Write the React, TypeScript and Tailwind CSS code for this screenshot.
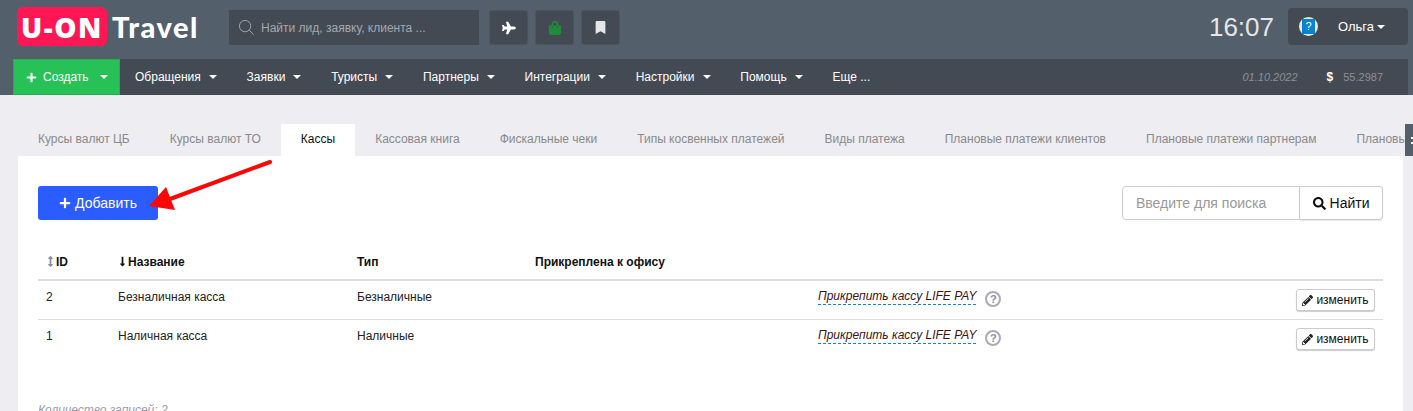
import { FaPlane, FaShoppingBag, FaBookmark, FaSearch, FaPlus, FaPencilAlt, FaLongArrowAltDown, FaArrowsAltV } from "react-icons/fa";

const F = "font-['Liberation_Sans',Arial,sans-serif]";

function Caret({ className = "" }: { className?: string }) {
  return <span className={`inline-block w-0 h-0 border-x-[4px] border-x-transparent border-t-[4px] border-t-white ${className}`} />;
}

const menu = ["Обращения", "Заявки", "Туристы", "Партнеры", "Интеграции", "Настройки", "Помощь"];

const tabs = [
  "Курсы валют ЦБ",
  "Курсы валют ТО",
  "Кассы",
  "Кассовая книга",
  "Фискальные чеки",
  "Типы косвенных платежей",
  "Виды платежа",
  "Плановые платежи клиентов",
  "Плановые платежи партнерам",
  "Плановые платежи",
];

function Row({ id, name, type, border }: { id: string; name: string; type: string; border: string }) {
  return (
    <div className={`flex text-[12px] text-[#222] whitespace-nowrap ${border}`}>
      <div className="w-[80px] pl-[8px] pt-[7px]">{id}</div>
      <div className="w-[239px] pt-[7px]">{name}</div>
      <div className="w-[461px] pt-[7px]">{type}</div>
      <div className="w-[190px] pt-[8px] flex items-start">
        <span className="italic text-[#3d1212] border-b border-dashed border-[#0b84d8] leading-[15px] h-[16px]">Прикрепить кассу LIFE PAY</span>
        <span className="ml-[9px] mt-[2px] w-[16px] h-[16px] rounded-full border-2 border-[#a9a9b8] text-[#8d8d9e] text-[11px] font-bold leading-[12px] text-center">?</span>
      </div>
      <div className="flex-1 flex justify-end pr-[8px] pt-[8px]">
        <span className="h-[22px] w-[79px] border border-[#ccc] rounded-[3px] shadow-[0_1px_1px_rgba(0,0,0,0.2)] flex items-center justify-center gap-[3px] text-[12px] text-[#111] bg-white">
          <FaPencilAlt size={11} className="text-[#222]" />изменить
        </span>
      </div>
    </div>
  );
}

export default function App() {
  return (
    <div className={`${F} relative w-[1413px] h-[411px] overflow-hidden bg-[#ededf2]`}>
      <div className="h-[95px] bg-[#535f6b]">
        {/* top header */}
        <div className="h-[59px] flex items-start pl-[17px]">
          <div className="mt-[7px] w-[90px] h-[39px] bg-[#ff1654] rounded-[6px] flex items-center justify-center text-white text-[28px] font-extrabold font-['Open_Sans',sans-serif] tracking-[1.5px]">U-ON</div>
          <div className="ml-[5px] mt-[8px] h-[38px] leading-[38px] text-white text-[29px] font-black font-['Lato',sans-serif] tracking-[1.5px] w-[117px]">Travel</div>
          <div className="mt-[10px] w-[250px] h-[35px] bg-[#434a54] flex items-center pl-[9px] text-[#a3a9af] text-[12px] gap-[6px]">
            <svg width="17" height="17" viewBox="0 0 24 24" fill="none" stroke="#a3a9af" strokeWidth="1.3"><circle cx="10" cy="10" r="8" /><path d="M16 16l6 6" /></svg>
            Найти лид, заявку, клиента ...
          </div>
          <div className="mt-[10px] ml-[10px] flex gap-[7px]">
            <div className="w-[39px] h-[35px] rounded-[3px] bg-[#434a54] border border-[#4d545c] flex items-center justify-center">
              <FaPlane size={14} className="text-white" />
            </div>
            <div className="w-[39px] h-[35px] rounded-[3px] bg-[#434a54] border border-[#4d545c] flex items-center justify-center">
              <FaShoppingBag size={14} className="text-[#1f8a3b]" />
            </div>
            <div className="w-[39px] h-[35px] rounded-[3px] bg-[#434a54] border border-[#4d545c] flex items-center justify-center">
              <FaBookmark size={13} className="text-[#e6e6e6]" />
            </div>
          </div>
          <div className="ml-auto flex items-start">
            <div className="mt-[10px] text-[26px] leading-[34px] text-[#e4e6e8] mr-[14px]">16:07</div>
            <div className="mt-[8px] w-[120px] h-[37px] rounded-[4px] bg-[#434a54] flex items-center pl-[11px] mr-[5px]">
              <span className="w-[19px] h-[19px] rounded-full bg-[#e8e8e8] flex items-center justify-center">
                <span className="w-[13px] h-[15px] bg-[#0a83cc] text-white text-[11px] text-center leading-[15px]">?</span>
              </span>
              <span className="ml-[20px] text-white text-[13px]">Ольга</span>
              <Caret className="ml-[3px]" />
            </div>
          </div>
        </div>

        {/* nav */}
        <div className="h-[36px] ml-[13px] mr-[5px] bg-[#434a54] flex items-center text-[12px] text-white">
          <div className="w-[107px] h-[36px] bg-[#27c158] flex items-center pl-[12px] border border-[#22b04f]">
            <FaPlus size={11} />
            <span className="ml-[6px]">Создать</span>
            <Caret className="ml-[11px]" />
          </div>
          <div className="flex items-center ml-[15px]">
            {menu.map((m) => (
              <span key={m} className="flex items-center mr-[29.8px]">
                {m}
                <Caret className="ml-[8px]" />
              </span>
            ))}
            <span>Еще ...</span>
          </div>
          <div className="ml-auto flex items-center pr-[25px] text-[11px] text-[#8a9098]">
            <span className="italic">01.10.2022</span>
            <span className="ml-[29px] font-bold text-white text-[12px]">$</span>
            <span className="ml-[10px]">55.2987</span>
          </div>
        </div>
      </div>

      {/* tabs */}
      <div className="pl-[18px] pt-[29px] flex h-[61px] text-[12px] text-[#8a8a8a] whitespace-nowrap overflow-hidden w-[1405px]">
        {tabs.map((t) => (
          <div
            key={t}
            className={`h-[32px] leading-[31px] px-[20px] ${t === "Кассы" ? "bg-white text-[#111]" : ""}`}
          >
            {t}
          </div>
        ))}
      </div>

      {/* panel */}
      <div className="ml-[18px] w-[1385px] h-[255px] bg-white pl-[20px] pr-[20px] pt-[30px]">
        <div className="flex justify-between items-start h-[67px]">
          <div className="w-[120px] h-[34px] bg-[#2b5cff] rounded-[3px] text-white text-[14px] flex items-center justify-center gap-[4px]">
            <FaPlus size={12} />
            Добавить
          </div>
          <div className="flex h-[34px] text-[14px]">
            <div className="w-[178px] border border-[#ccc] rounded-l-[4px] pl-[13px] leading-[32px] text-[#999]">Введите для поиска</div>
            <div className="w-[83px] border border-l-0 border-[#ccc] rounded-r-[4px] flex items-center justify-center gap-[4px] text-[#111] shadow-[0_1px_1px_rgba(0,0,0,0.1)]">
              <FaSearch size={13} />Найти
            </div>
          </div>
        </div>
        <div className="flex h-[28px] border-b-2 border-[#ddd] text-[12px] font-bold text-[#111]">
          <div className="w-[80px] pl-[7px] flex items-start"><FaArrowsAltV size={11} className="text-[#8d8d9e] mt-[3px]" />ID</div>
          <div className="w-[239px] flex items-start"><FaLongArrowAltDown size={11} className="mt-[3px] -ml-[1px]" />Название</div>
          <div className="w-[178px]">Тип</div>
          <div>Прикреплена к офису</div>
        </div>
        <div className="h-[39px]"><Row id="2" name="Безналичная касса" type="Безналичные" border="h-[39px] border-b border-[#ddd]" /></div>
        <div className="h-[40px]"><Row id="1" name="Наличная касса" type="Наличные" border="h-[40px]" /></div>
        <div className="mt-[41px] italic text-[12px] text-[#9a9aaa]">Количество записей: 2</div>
      </div>

      {/* tab scroller */}
      <div className="absolute left-[1405px] top-[124px] w-[8px] h-[32px] bg-[#535f6b] flex flex-col items-end justify-center gap-[3px] pr-[0px]">
        <span className="w-[2px] h-[2px] bg-white" />
        <span className="w-[2px] h-[2px] bg-white" />
      </div>

      {/* annotation arrow */}
      <svg className="absolute left-[140px] top-[155px]" width="140" height="65" viewBox="0 0 140 65">
        <path d="M130 7 L30 44" stroke="#fd0606" strokeWidth="4" strokeLinecap="round" />
        <path d="M9 51 L26 32 L35 55 Z" fill="#fd0606" />
      </svg>
    </div>
  );
}
